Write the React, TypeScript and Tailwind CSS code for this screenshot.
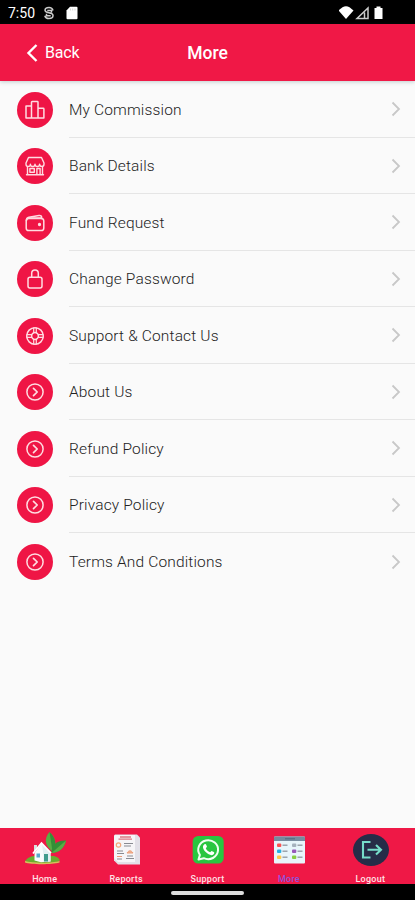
import React from "react";

const glyph = {
  fill: "none",
  stroke: "#ffdce1",
  strokeWidth: 1.5,
  strokeLinejoin: "round" as const,
  strokeLinecap: "round" as const,
};

function Podium() {
  return (
    <svg width="20" height="20" viewBox="0 0 20 20" {...glyph}>
      <path d="M1 6h5.500V18H1zM6.500 18V2.200q0-.7.7-.7h5.100q.7 0 .7.7V18zM13 8.200h5.200q.7 0 .7.700V18H13z" />
    </svg>
  );
}

function Store() {
  return (
    <svg width="20" height="20" viewBox="0 0 20 20" {...glyph} strokeWidth="1.400">
      <path d="M3.500 1.500h13L19 7v1.200a2.200 2.200 0 0 1-4.400 0 2.300 2.300 0 0 1-4.600 0 2.300 2.300 0 0 1-4.600 0A2.200 2.200 0 0 1 1 8.200V7zM2.500 10.500v8M17.500 10.500v8M1.500 18.700h17M4.900 12.500h4.400v3.800H4.900zM11.900 18.500v-6h3.200v6" />
    </svg>
  );
}

function Wallet() {
  return (
    <svg width="20" height="20" viewBox="0 0 20 20" {...glyph}>
      <rect x="1.200" y="5.500" width="17.600" height="12" rx="2.600" />
      <path d="M1.400 7.500c0-2 .7-2.900 2.500-3.300L14 2.500c1.800-.3 2.700.5 2.700 2.200v.9" />
      <path d="M4 4.800h12" strokeWidth="1.200" />
      <circle cx="14.500" cy="11.500" r=".9" fill="#ffdce1" />
    </svg>
  );
}

function Lock() {
  return (
    <svg width="20" height="20" viewBox="0 0 20 20" {...glyph}>
      <rect x="3" y="8.200" width="14" height="10.800" rx="2" />
      <path d="M6.700 8.200V4.200a3.300 3.300 0 0 1 6.600 0v4" />
    </svg>
  );
}

function Wheel() {
  return (
    <svg width="20" height="20" viewBox="0 0 20 20" {...glyph}>
      <circle cx="10" cy="10" r="8.300" />
      <circle cx="10" cy="10" r="3.400" />
      <path d="M8.700 1.900v5M11.300 1.900v5M8.700 13.100v5M11.300 13.100v5M1.900 8.700h5M1.900 11.300h5M13.100 8.700h5M13.100 11.300h5" strokeWidth="1.200" />
    </svg>
  );
}

function ArrowCircle() {
  return (
    <svg width="20" height="20" viewBox="0 0 20 20" {...glyph}>
      <circle cx="10" cy="10" r="8.100" />
      <path d="m8.500 6.300 3.700 3.700-3.700 3.700" strokeWidth="1.700" />
    </svg>
  );
}

const rows = [
  { label: "My Commission", Icon: Podium },
  { label: "Bank Details", Icon: Store },
  { label: "Fund Request", Icon: Wallet },
  { label: "Change Password", Icon: Lock },
  { label: "Support & Contact Us", Icon: Wheel },
  { label: "About Us", Icon: ArrowCircle },
  { label: "Refund Policy", Icon: ArrowCircle },
  { label: "Privacy Policy", Icon: ArrowCircle },
  { label: "Terms And Conditions", Icon: ArrowCircle },
];

function HomeIcon() {
  return (
    <svg className="overflow-visible" width="40" height="34" viewBox="0 0 40 34">
      <path d="M0 28c3-4 7-5 10-5h19c4 1 6 3 5.500 5-6 3-29 3.500-34.500 0z" fill="#6bab2f" />
      <path d="M0 28c8 2.300 27 2.300 34.500 0v1.500c-8 2.300-28 2.300-34.500 0z" fill="#d2c25a" />
      <path d="M27.500 18.500C20 13 18.500 6 24.500-1 31 5 32 12 27.500 18.500z" fill="#5aae45" />
      <path d="M24.500-1C31 5 32 12 27.500 18.500z" fill="#339037" />
      <path d="M26.500 20c0-8 5-13 14.500-12.500C39.500 15 34 20 26.500 20z" fill="#339037" />
      <path d="M26.500 20 41 7.500C39.500 15 34 20 26.500 20z" fill="#5aae45" />
      <path d="M9 19v-7h3v4" fill="#d9e2df" />
      <path d="M9.500 20 16.500 10.500l9 9.500v8.500l-9.500.7-6.500-1.700z" fill="#f8fcfc" />
      <path d="m17 11.500 8.500 8.500v8.500l-7 .5v-7z" fill="#e2f0f1" />
      <path d="m8 20.500 8.500-10.500 9.500 10" fill="none" stroke="#fff" strokeWidth="1.800" />
      <path d="M11.500 20.500h3.500v4h-3.500z" fill="#58a9cc" />
      <path d="M19 21h4V28.500h-4z" fill="#3f9c8c" />
    </svg>
  );
}

function ReportIcon() {
  return (
    <svg width="40" height="34" viewBox="0 0 40 34">
      <path d="M9 1.500h22l3 3v27H12l-4-4v-25z" fill="#e2e0e7" />
      <path d="M9 2h20v27H12l-4-4V3z" fill="#f6f5f7" />
      <path d="M14 4h11M12.500 6.200h13.500" stroke="#db7884" strokeWidth="1.300" />
      <circle cx="12.500" cy="12" r="2.200" fill="none" stroke="#f3a77a" strokeWidth="1.200" />
      <path d="M18 10.500h9M18 13h7M11 18h6M11 20.500h7M21 23h6M20 25.500h8M11 26h5" stroke="#898b91" strokeWidth="1.200" />
      <path d="M21 20c2-3 4-3 6 0zM11 23.500h5" stroke="#ec9d78" fill="#f2b392" />
    </svg>
  );
}

function WhatsIcon() {
  return (
    <svg width="40" height="34" viewBox="0 0 40 34">
      <rect x="4.700" y="3" width="31" height="27.500" rx="5.500" fill="#29c640" />
      <path d="M10.500 26.500l1.400-4.600a9.900 9.500 0 1 1 3.900 3.300z" fill="none" stroke="#effff0" strokeWidth="2" strokeLinejoin="round" />
      <path d="M16.500 11.300c.7-.5 1.400-.3 1.700.4l.8 2-1.200 1.500c1 2.100 2.200 3.200 4.300 4.100l1.500-1.400 2.200 1.100c.9.500.4 2-.5 2.600-1.800 1.300-5 .1-7.600-2.500-2.800-2.800-3.800-6.100-1.200-7.800z" fill="#fff" />
    </svg>
  );
}

function MoreIcon() {
  const dots = ["#fa5252", "#a5b1bd", "#29afe3", "#9757b9", "#ffc94b", "#87ce42"];
  return (
    <svg width="40" height="34" viewBox="0 0 40 34">
      <rect x="5" y="3.500" width="31" height="27" rx="1" fill="#e8f5fb" />
      <path d="M5 8V4.500q0-1 1-1h29q1 0 1 1V8z" fill="#778b9f" />
      <path d="M16 5.800h10" stroke="#53697d" strokeWidth="1" />
      {dots.map((c, i) => (
        <g key={c}>
          <rect x={8 + (i % 2) * 15} y={10.5 + Math.floor(i / 2) * 6} width="4.300" height="3.600" rx="1" fill={c} />
          <path d={`M${13.5 + (i % 2) * 15} ${12.2 + Math.floor(i / 2) * 6}h5`} stroke="#8f979f" strokeWidth="1.300" />
        </g>
      ))}
    </svg>
  );
}

function LogoutIcon() {
  return (
    <svg width="40" height="34" viewBox="0 0 40 34">
      <ellipse cx="21" cy="17" rx="18" ry="16" fill="#262c48" />
      <path d="M20.500 9H13v15.500h7.500M17.500 16.800H31M26 12l5 4.800-5 4.800" fill="none" stroke="#76dcca" strokeWidth="2.100" />
    </svg>
  );
}

const tabs = [
  { label: "Home", Icon: HomeIcon },
  { label: "Reports", Icon: ReportIcon },
  { label: "Support", Icon: WhatsIcon },
  { label: "More", Icon: MoreIcon, active: true },
  { label: "Logout", Icon: LogoutIcon },
];

export default function App() {
  return (
    <div className="flex h-[900px] w-[415px] flex-col overflow-hidden bg-[#fafafa] font-['Roboto',sans-serif]">
      <div className="flex h-[24px] shrink-0 items-center bg-black pt-[2px] pl-[8px] text-white">
        <span className="w-[35px] pb-px text-[14px] leading-none">7:50</span>
        <svg className="shrink-0" width="12" height="14" viewBox="0 0 12 14" fill="none" stroke="#ccc" strokeWidth="1.500">
          <path d="M10 4.500C9.500 2.500 8 1.500 6 1.500c-2.500 0-4 1.200-4 2.800C2 7.700 10 5.800 10 9.500c0 1.800-1.600 3-4 3-2.200 0-3.700-1-4.200-2.800M4.300 4.500h4.200v2M7.700 9.700H3.500v-2" />
        </svg>
        <svg className="ml-[11px] shrink-0" width="12" height="14" viewBox="0 0 12 14">
          <path d="M4 .7h6.500q1 0 1 1v10.500q0 1-1 1h-9q-1 0-1-1V4.500z" fill="white" />
          <path d="M4.500 2.500v2M6.700 2.500v2M9 2.500v2" stroke="#ccc" strokeWidth=".8" />
        </svg>
        <svg className="mr-[31px] ml-auto shrink-0" width="45" height="14" viewBox="0 0 45 14">
          <path d="M4 1.200q3.500-1.700 7 0L15 4.500 7.500 13 0 4.500z" transform="translate(-.5 0)" fill="white" />
          <path d="M29 2v10.500H18zM25.500 6.500v5.500" fill="none" stroke="#ccc" strokeWidth="1.500" />
          <path d="M37.500.5h4v1.500h2v11h-8V2h2z" fill="white" />
        </svg>
      </div>
      <header className="z-10 grid h-[57px] shrink-0 grid-cols-3 items-center bg-[#f01846] pt-px text-white shadow-[0_1px_4px_rgba(30,70,75,0.250)]">
        <div className="flex items-center pl-[26px]">
          <svg width="12" height="20" viewBox="0 0 12 20" fill="none" stroke="white" strokeWidth="2.400">
            <path d="m10.500 2-8 8 8 8" />
          </svg>
          <span className="ml-[7px] text-[16px] leading-none tracking-[-0.200px]">Back</span>
        </div>
        <h1 className="pt-px text-center text-[17.500px] leading-none font-medium">More</h1>
      </header>
      <main className="flex-1">
        {rows.map(({ label, Icon }, i) => (
          <div key={label} className="flex h-[56.500px] items-center pl-[16.500px]">
            <div className="mt-[0.500px] flex size-[36px] shrink-0 items-center justify-center rounded-full bg-[#ef1545]">
              <Icon />
            </div>
            <div className={`ml-[16.500px] flex h-full flex-1 items-center justify-between pr-[14px] ${i < 8 ? "border-b border-[#e5e5e5]" : ""}`}>
              <span className="pt-[3px] text-[15.500px] leading-none font-light tracking-[0.150px] text-[#222]">{label}</span>
              <svg className="mt-px" width="10" height="16" viewBox="0 0 10 16" fill="none" stroke="#c8c8c8" strokeWidth="1.800">
                <path d="m1.500 1.500 6.500 6.500-6.500 6.500" />
              </svg>
            </div>
          </div>
        ))}
      </main>
      <nav className="flex h-[56px] shrink-0 bg-[#ef1846] px-[4px]">
        {tabs.map(({ label, Icon, active }) => (
          <div key={label} className="flex flex-1 flex-col items-center pt-[5px]">
            <Icon />
            <span className={`mt-[7px] text-[9px] leading-[10px] font-medium tracking-[0.250px] ${active ? "text-[#9052dc]" : "text-[#ffe1e5]"}`}>{label}</span>
          </div>
        ))}
      </nav>
      <div className="flex h-[16px] shrink-0 justify-center bg-black pt-[7px]">
        <div className="h-[4px] w-[73px] rounded-sm bg-[#ddd]" />
      </div>
    </div>
  );
}
